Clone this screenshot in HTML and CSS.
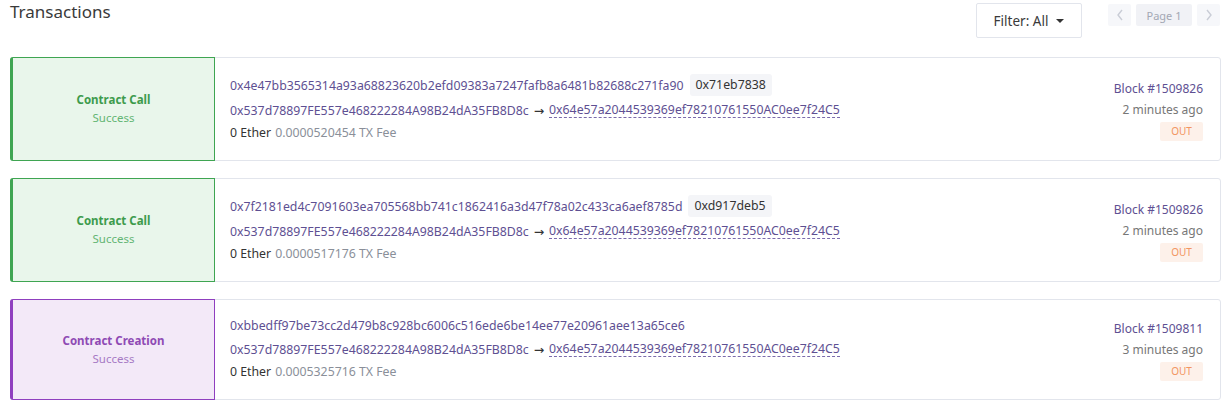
FILE: index.html
```html
<!DOCTYPE html>
<html>
<head>
<meta charset="utf-8">
<link rel="stylesheet" href="styles.css">
</head>
<body>
<div class="page">
  <div class="header">
    <h1 class="title">Transactions</h1>
    <div class="controls">
      <button class="filter">Filter: All <span class="caret"></span></button>
      <div class="pager">
        <span class="pbtn"><svg width="8" height="12" viewBox="0 0 8 12"><path d="M6 1 L2 6 L6 11" fill="none" stroke="#c9cdd6" stroke-width="1.4"/></svg></span>
        <span class="pnum">Page 1</span>
        <span class="pbtn"><svg width="8" height="12" viewBox="0 0 8 12"><path d="M2 1 L6 6 L2 11" fill="none" stroke="#c9cdd6" stroke-width="1.4"/></svg></span>
      </div>
    </div>
  </div>

  <div class="list">
    <div class="card">
      <div class="status call"><div class="stype">Contract Call</div><div class="sres">Success</div></div>
      <div class="main">
        <div class="row"><span class="hash">0x4e47bb3565314a93a68823620b2efd09383a7247fafb8a6481b82688c271fa90</span><span class="tag">0x71eb7838</span></div>
        <div class="row"><span class="hash">0x537d78897FE557e468222284A98B24dA35FB8D8c</span><span class="arrow">→</span><span class="hash dashed">0x64e57a2044539369ef78210761550AC0ee7f24C5</span></div>
        <div class="row"><span class="eth">0 Ether</span><span class="fee">0.0000520454 TX Fee</span></div>
      </div>
      <div class="side">
        <div class="block">Block #1509826</div>
        <div class="time">2 minutes ago</div>
        <span class="out">OUT</span>
      </div>
    </div>

    <div class="card">
      <div class="status call"><div class="stype">Contract Call</div><div class="sres">Success</div></div>
      <div class="main">
        <div class="row"><span class="hash">0x7f2181ed4c7091603ea705568bb741c1862416a3d47f78a02c433ca6aef8785d</span><span class="tag">0xd917deb5</span></div>
        <div class="row"><span class="hash">0x537d78897FE557e468222284A98B24dA35FB8D8c</span><span class="arrow">→</span><span class="hash dashed">0x64e57a2044539369ef78210761550AC0ee7f24C5</span></div>
        <div class="row"><span class="eth">0 Ether</span><span class="fee">0.0000517176 TX Fee</span></div>
      </div>
      <div class="side">
        <div class="block">Block #1509826</div>
        <div class="time">2 minutes ago</div>
        <span class="out">OUT</span>
      </div>
    </div>

    <div class="card">
      <div class="status create"><div class="stype">Contract Creation</div><div class="sres">Success</div></div>
      <div class="main">
        <div class="row"><span class="hash">0xbbedff97be73cc2d479b8c928bc6006c516ede6be14ee77e20961aee13a65ce6</span></div>
        <div class="row"><span class="hash">0x537d78897FE557e468222284A98B24dA35FB8D8c</span><span class="arrow">→</span><span class="hash dashed">0x64e57a2044539369ef78210761550AC0ee7f24C5</span></div>
        <div class="row"><span class="eth">0 Ether</span><span class="fee">0.0005325716 TX Fee</span></div>
      </div>
      <div class="side">
        <div class="block">Block #1509811</div>
        <div class="time">3 minutes ago</div>
        <span class="out">OUT</span>
      </div>
    </div>
  </div>
</div>
</body>
</html>
```

FILE: styles.css
```css
* { box-sizing: border-box; }
html, body { margin: 0; padding: 0; background: #fff; }
body { font-family: "Noto Sans", "DejaVu Sans", sans-serif; color: #333; }
.page { padding: 3px 8px 0 10px; }
.header { display: flex; justify-content: space-between; align-items: flex-start; height: 54px; }
.title { margin: 0; font-size: 17px; font-weight: 400; color: #3a3a3a; line-height: 20px; margin-top: -1px; }
.controls { display: flex; align-items: flex-start; gap: 26px; }
.filter { width: 106px; height: 35px; background: #fff; border: 1px solid #e2e5ec; border-radius: 2px; font-family: inherit; font-size: 13.5px; color: #3a3a3a; display: flex; align-items: center; justify-content: center; gap: 8px; padding: 0; }
.caret { width: 0; height: 0; border-left: 4px solid transparent; border-right: 4px solid transparent; border-top: 4px solid #333; }
.pager { display: flex; gap: 5px; margin-top: 1px; margin-right: 1px; }
.pbtn { width: 23px; height: 22px; background: #f6f7fa; display: flex; align-items: center; justify-content: center; border-radius: 2px; }
.pnum { width: 56px; height: 22px; background: #f1f2f6; color: #a3a8b4; font-size: 11px; display: flex; align-items: center; justify-content: center; border-radius: 2px; }
.list { display: flex; flex-direction: column; gap: 17px; }
.card { display: flex; align-items: stretch; border: 1px solid #e2e5ec; border-radius: 3px; }
.status { width: 205px; flex: none; margin: -1px 0 -1px -1px; display: flex; flex-direction: column; align-items: center; justify-content: center; border: 1px solid; border-left-width: 3px; border-radius: 3px 0 0 3px; font-size: 11.5px; line-height: 18px; }
.status.call { background: #e9f6eb; border-color: #3fa552; color: #3d9b4d; }
.status.call .sres { color: #63b573; }
.status.create { background: #f3e9f8; border-color: #8f3fbf; color: #8e4ab4; }
.status.create .sres { color: #a679c4; }
.stype { font-weight: 700; }
.main { flex: 1; padding: 16px 0 17px 15px; font-size: 12.3px; }
.row { display: flex; align-items: center; min-height: 19px; white-space: nowrap; }
.row:first-child { margin-bottom: 3px; }
.row + .row { height: 22px; }
.hash { color: #5e4f92; }
.dashed { border-bottom: 1px dashed #7a6aab; line-height: 14px; }
.arrow { color: #333; margin: 0 5px; }
.tag { background: #f4f5f8; color: #333; padding: 0 6px; height: 22px; line-height: 22px; border-radius: 3px; margin-left: 6px; }
.eth { color: #333; margin-right: 4px; }
.fee { color: #8a8f99; }
.side { display: flex; flex-direction: column; align-items: flex-end; justify-content: center; padding: 0 17px 0 0; font-size: 12px; line-height: 21px; }
.block { color: #5e4f92; }
.time { color: #777; }
.out { margin-top: 2px; width: 43px; height: 19px; background: #fdf1ea; color: #f29560; font-size: 10px; display: flex; align-items: center; justify-content: center; border-radius: 2px; }
```
